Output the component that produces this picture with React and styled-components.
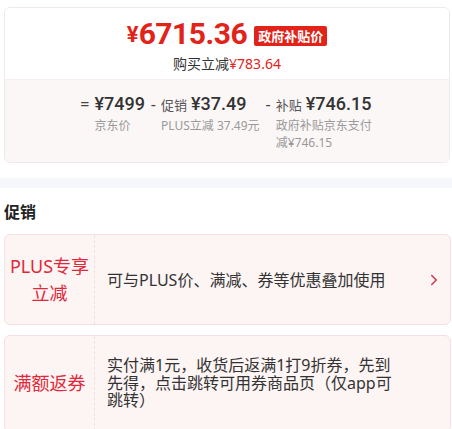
import styled, { createGlobalStyle } from 'styled-components'
import { ChevronRight } from 'lucide-react'

const GlobalStyle = createGlobalStyle`
body {
  margin: 0;
  background: #fff;
  font-family: "Noto Sans", "Noto Sans CJK SC", sans-serif;
  color: #333;
}
`;

const Page = styled.div`
width: 452px;
padding-top: 7px;
`;
const Inset = styled.div`
padding: 0 1px 0 4px;
`;
const PriceCard = styled.div`
border: 1px solid #f0e9e9;
border-radius: 6px;
overflow: hidden;
margin-right: 1px;
`;
const Top = styled.div`
background: #fff;
padding: 11px 0 5px;
display: flex;
flex-direction: column;
align-items: center;
`;
const PriceRow = styled.div`
display: flex;
align-items: flex-end;
color: #e2231a;
font-family: Roboto, "Noto Sans CJK SC", sans-serif;
font-weight: 700;
`;
const Yen = styled.span`
font-size: 22px;
line-height: 22px;
margin-bottom: 3px;
`;
const BigNum = styled.span`
font-size: 30px;
line-height: 30px;
letter-spacing: -0.5px;
`;
const Badge = styled.span`
margin: 0 0 3px 7px;
background: #e2231a;
color: #fff;
font-family: "Noto Sans CJK SC", sans-serif;
font-size: 13px;
font-weight: 700;
line-height: 20px;
padding: 0 4px;
border-radius: 2px;
`;
const SubLine = styled.div`
margin-top: 5px;
font-size: 14px;
line-height: 20px;
color: #333;
`;
const Red = styled.span`
color: #e2231a;
`;
const Bottom = styled.div`
background: #fcf7f7;
border-top: 1px solid #f7efef;
padding: 13px 0 11px;
display: flex;
justify-content: center;
align-items: flex-start;
gap: 6px;
`;
const Col = styled.div`
display: flex;
align-items: flex-start;
`;
const Sign = styled.span`
font-size: 16px;
line-height: 22px;
color: #444;
margin-right: 5px;
`;
const Block = styled.div`
display: flex;
flex-direction: column;
max-width: ${(p) => p.max || 'none'};
`;
const ValueLine = styled.div`
display: flex;
align-items: baseline;
gap: 4px;
white-space: nowrap;
`;
const Tag = styled.span`
font-size: 13px;
color: #555;
`;
const Value = styled.span`
font-family: Roboto, "Noto Sans CJK SC", sans-serif;
font-size: 18px;
line-height: 22px;
font-weight: 500;
color: #333;
`;
const Label = styled.div`
margin-top: 2px;
font-size: 12px;
line-height: 17px;
color: #999;
`;
const Band = styled.div`
margin-top: 15px;
height: 10px;
background: #f6f7fb;
`;
const Heading = styled.h2`
margin: 13px 0 11px;
font-size: 16px;
line-height: 22px;
font-weight: 700;
color: #222;
`;
const PromoList = styled.div`
display: flex;
flex-direction: column;
gap: 10px;
`;
const Promo = styled.div`
display: flex;
background: #fdf4f4;
border: 1px solid #f5e1e3;
border-radius: 6px;
min-height: 89px;
`;
const PromoTag = styled.div`
width: 89px;
flex-shrink: 0;
border-right: 1px dashed #f3dfe2;
display: flex;
align-items: center;
justify-content: center;
text-align: center;
font-size: 18px;
line-height: 27px;
color: #e0283a;
`;
const PromoBody = styled.div`
flex: 1;
display: flex;
align-items: center;
padding: 21px 7px 21px 12px;
`;
const PromoText = styled.div`
flex: 1;
max-width: 292px;
font-size: 16px;
line-height: ${(p) => (p.multi ? '17.5px' : '22px')};
color: #333;
`;
const Arrow = styled.span`
margin-left: auto;
display: flex;
color: #c8394c;
`;

export default function App() {
  return (
    <Page>
      <GlobalStyle />
      <Inset>
        <PriceCard>
          <Top>
            <PriceRow>
              <Yen>¥</Yen>
              <BigNum>6715.36</BigNum>
              <Badge>政府补贴价</Badge>
            </PriceRow>
            <SubLine>
              购买立减<Red>¥783.64</Red>
            </SubLine>
          </Top>
          <Bottom>
            <Col>
              <Sign>=</Sign>
              <Block>
                <ValueLine>
                  <Value>¥7499</Value>
                </ValueLine>
                <Label>京东价</Label>
              </Block>
            </Col>
            <Col>
              <Sign>-</Sign>
              <Block>
                <ValueLine>
                  <Tag>促销</Tag>
                  <Value>¥37.49</Value>
                </ValueLine>
                <Label>PLUS立减 37.49元</Label>
              </Block>
            </Col>
            <Col>
              <Sign>-</Sign>
              <Block max="98px">
                <ValueLine>
                  <Tag>补贴</Tag>
                  <Value>¥746.15</Value>
                </ValueLine>
                <Label>政府补贴京东支付减¥746.15</Label>
              </Block>
            </Col>
          </Bottom>
        </PriceCard>
      </Inset>
      <Band />
      <Inset>
        <Heading>促销</Heading>
        <PromoList>
          <Promo>
            <PromoTag>PLUS专享<br />立减</PromoTag>
            <PromoBody>
              <PromoText>可与PLUS价、满减、券等优惠叠加使用</PromoText>
              <Arrow><ChevronRight size={18} strokeWidth={2} /></Arrow>
            </PromoBody>
          </Promo>
          <Promo>
            <PromoTag>满额返券</PromoTag>
            <PromoBody>
              <PromoText multi>实付满1元，收货后返满1打9折券，先到先得，点击跳转可用券商品页（仅app可跳转）</PromoText>
            </PromoBody>
          </Promo>
        </PromoList>
      </Inset>
    </Page>
  )
}
